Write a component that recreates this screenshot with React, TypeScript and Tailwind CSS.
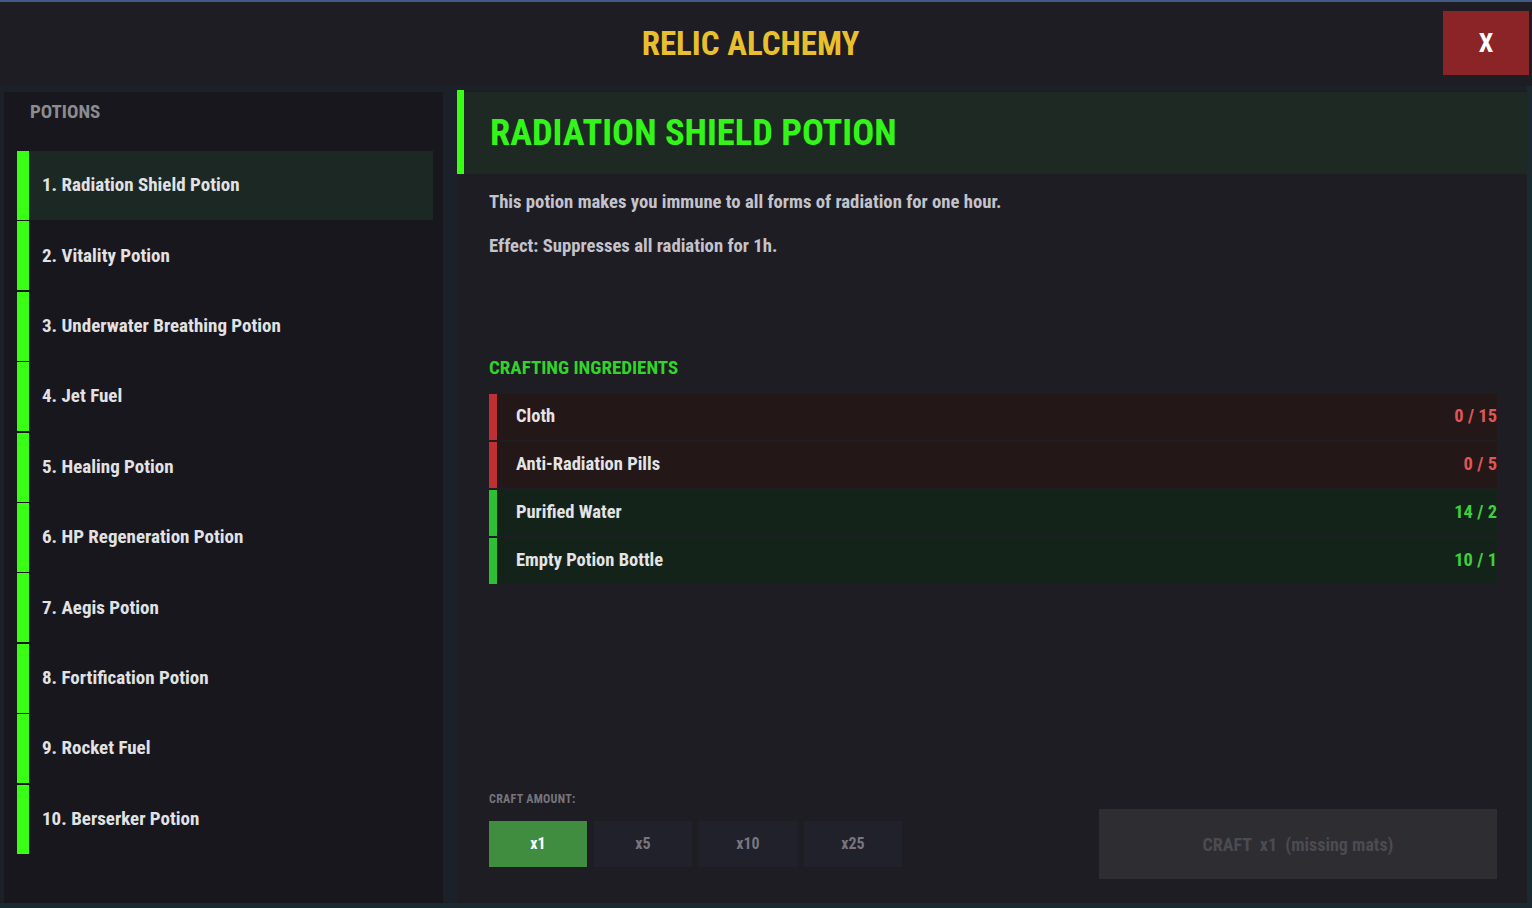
import { useState } from "react";

const potions = [
  "Radiation Shield Potion",
  "Vitality Potion",
  "Underwater Breathing Potion",
  "Jet Fuel",
  "Healing Potion",
  "HP Regeneration Potion",
  "Aegis Potion",
  "Fortification Potion",
  "Rocket Fuel",
  "Berserker Potion",
];

const ingredients = [
  { name: "Cloth", have: 0, need: 15 },
  { name: "Anti-Radiation Pills", have: 0, need: 5 },
  { name: "Purified Water", have: 14, need: 2 },
  { name: "Empty Potion Bottle", have: 10, need: 1 },
];

const amounts = [1, 5, 10, 25];

const font = { fontFamily: '"Roboto Condensed", Roboto, sans-serif' };

const App = () => {
  const [selected, setSelected] = useState(0);
  const [amount, setAmount] = useState(1);

  return (
    <div className="w-[1532px] h-[908px] overflow-hidden bg-[#1a2a30] font-stretch-condensed" style={font}>
      <div className="h-[2px] bg-[#3f5b86]" />
      {/* Header */}
      <div className="h-[84px] bg-[#1e1d23] relative flex items-center justify-center pr-[31px]">
        <h1 className="text-[33px] font-bold text-[#e8bf2e]">RELIC ALCHEMY</h1>
        <button className="absolute right-[3px] top-[9px] w-[86px] h-[64px] bg-[#8b2426] text-white text-[26px] font-bold flex items-center justify-center">
          X
        </button>
      </div>

      {/* Body */}
      <div className="w-[1527px] h-[817px] flex pl-[4px] gap-[14px] bg-[#1b2029]">
        {/* Left panel */}
        <div className="w-[439px] mt-[6px] bg-[#18171d] flex flex-col">
          <div className="h-[59px] pl-[26px] flex items-center text-[19px] font-bold text-[#8c8c8f] pb-[18px]">POTIONS</div>
          <div className="flex flex-col gap-[1.4px] pl-[13px] pr-[10px]">
            {potions.map((p, i) => (
              <button
                key={p}
                onClick={() => setSelected(i)}
                className={`h-[69px] flex items-center text-left border-l-[12px] border-[#39ff14] pl-[13px] text-[19px] font-bold text-[#e2e2e4] ${
                  selected === i ? "bg-[#1c2823]" : "bg-transparent"
                }`}
              >
                {i + 1}. {p}
              </button>
            ))}
          </div>
        </div>

        {/* Right panel */}
        <div className="flex-1 mt-[4px] bg-[#1e1d23] flex flex-col">
          <div className="h-[84px] shrink-0 flex">
            <div className="w-[7px] bg-[#39ff14]" />
            <div className="flex-1 mt-[2px] bg-[#1d2922] flex items-center pl-[26px]">
              <h2 className="text-[36.5px] font-bold text-[#33f51a]">{potions[selected].toUpperCase()}</h2>
            </div>
          </div>

          <div className="flex-1 flex flex-col px-[32px] pr-[30px] pb-[24px]">
            <p className="mt-[14px] text-[18.7px] font-bold text-[#c4c3cc]">
              This potion makes you immune to all forms of radiation for one hour.
            </p>
            <p className="mt-[16px] text-[18.7px] font-bold text-[#c4c3cc]">Effect: Suppresses all radiation for 1h.</p>

            <h3 className="mt-[94px] text-[19px] font-bold text-[#33d42a]">CRAFTING INGREDIENTS</h3>
            <div className="mt-[11px] flex flex-col gap-[2px]">
              {ingredients.map((ing) => {
                const ok = ing.have >= ing.need;
                return (
                  <div
                    key={ing.name}
                    className={`h-[46px] flex items-center justify-between border-l-[8px] pl-[19px] text-[18.5px] font-bold ${
                      ok ? "border-[#2fbf34] bg-[#14231a]" : "border-[#bf3034] bg-[#231718]"
                    }`}
                  >
                    <span className="text-[#e4e4e6]">{ing.name}</span>
                    <span className={ok ? "text-[#3fcf3c]" : "text-[#e05656]"}>
                      {ing.have} / {ing.need}
                    </span>
                  </div>
                );
              })}
            </div>

            <div className="mt-auto flex items-end justify-between">
              <div className="flex flex-col pb-[12px]">
                <span className="text-[12px] font-bold tracking-[0.3px] text-[#76757c]">CRAFT AMOUNT:</span>
                <div className="mt-[13px] flex gap-[7px]">
                  {amounts.map((a) => (
                    <button
                      key={a}
                      onClick={() => setAmount(a)}
                      className={`w-[98px] h-[46px] text-[16px] font-bold ${
                        amount === a ? "bg-[#418d3f] text-white" : "bg-[#21212b] text-[#77767e]"
                      }`}
                    >
                      x{a}
                    </button>
                  ))}
                </div>
              </div>
              <button className="w-[398px] h-[70px] bg-[#2e2d32] text-[18px] font-bold text-[#4c4b51] whitespace-pre">
                {`CRAFT  x${amount}  (missing mats)`}
              </button>
            </div>
          </div>
        </div>
      </div>
    </div>
  );
};

export default App;
